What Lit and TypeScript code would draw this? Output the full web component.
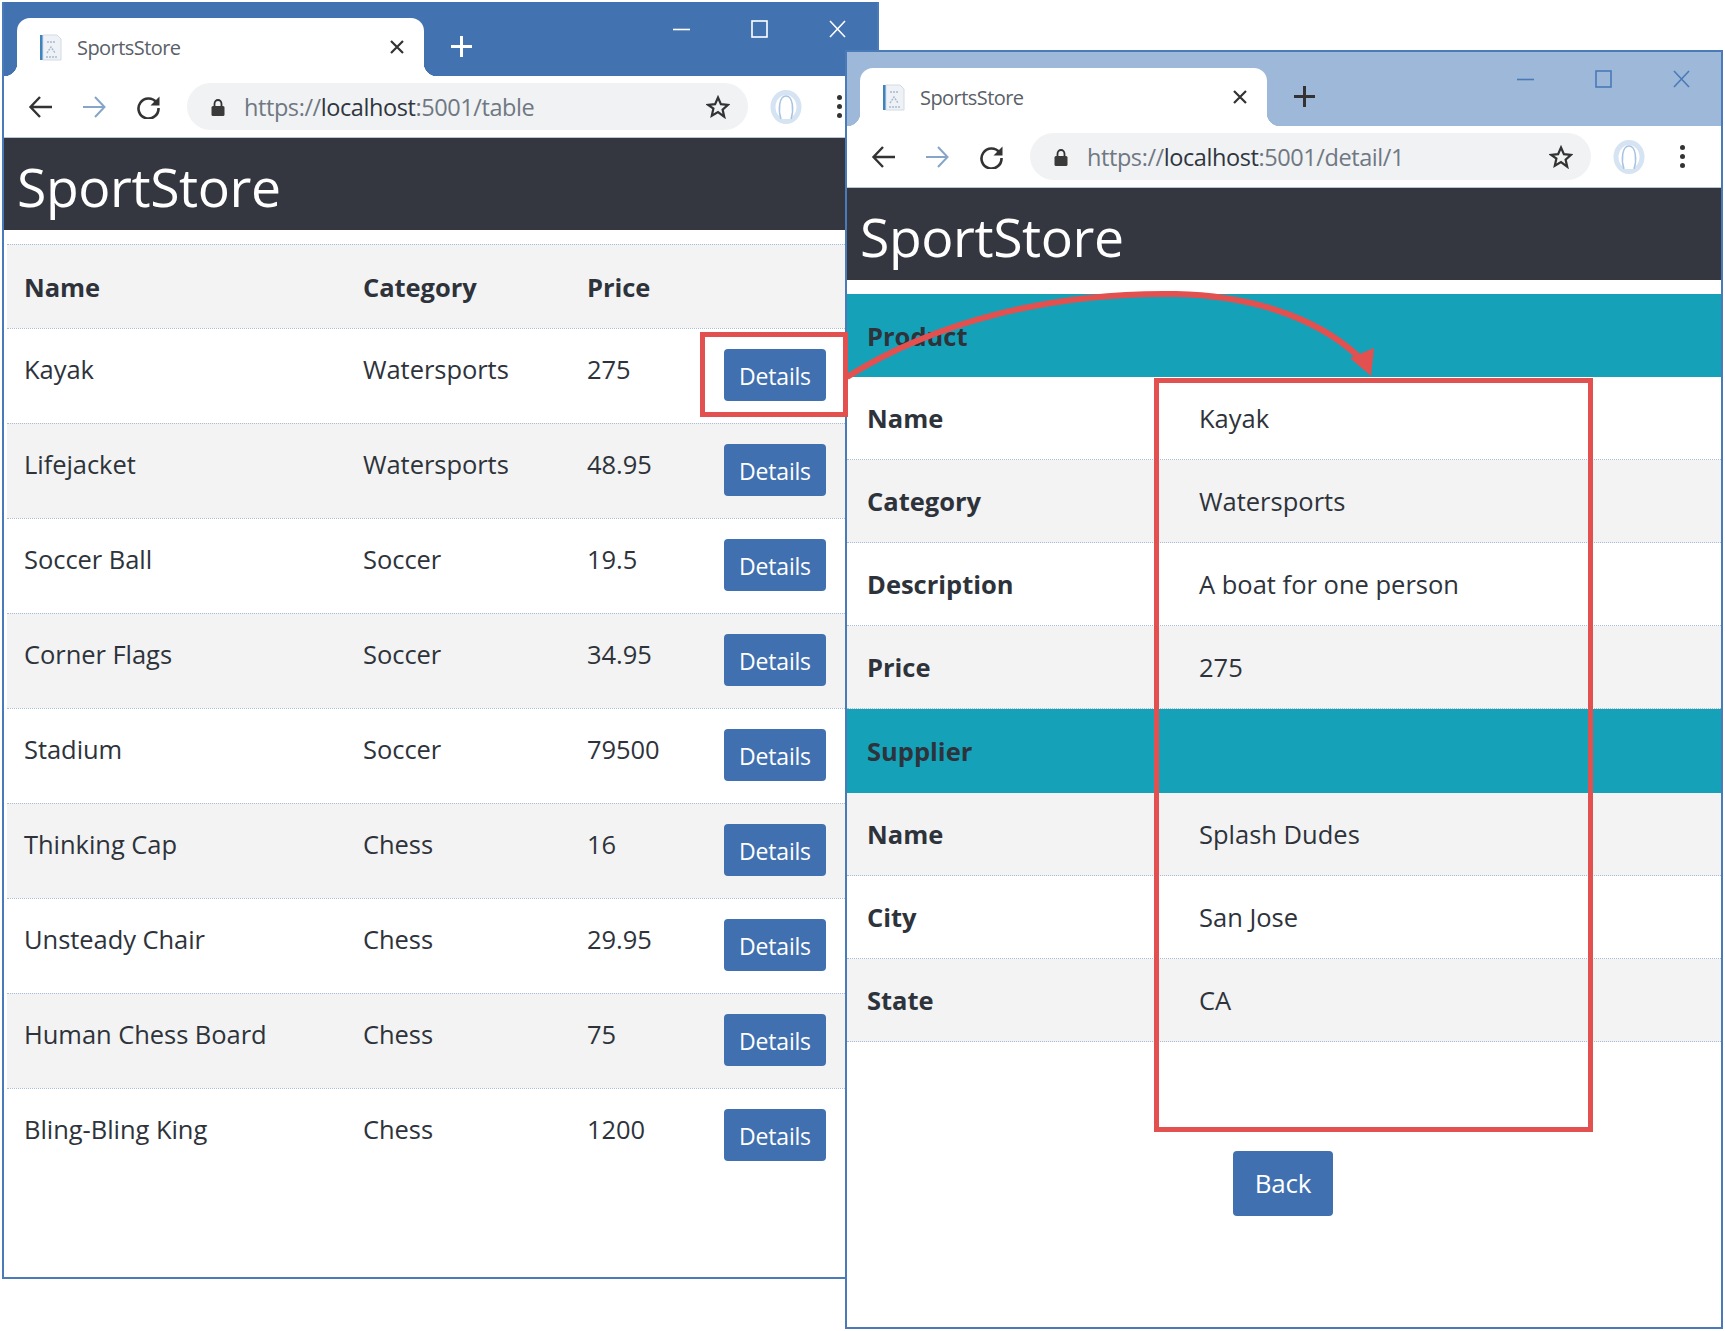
import { LitElement, html, css, svg } from 'lit';
import { customElement, property } from 'lit/decorators.js';

const icons = {
  favicon: svg`<rect x="3" y="2" width="3" height="25" fill="#3f83bd"/><path d="M6 2h14l4 4v21H6z" fill="#eef2f7" stroke="#d3dbe5"/><path d="M10 9h9M10 20l4-6 4 6M9 24h12" fill="none" stroke="#a9b9cc" stroke-width="1.400" stroke-dasharray="2 1"/>`,
  back: svg`<path d="M24 12H3M12 2L2.500 12l9.500 10" fill="none" stroke="#333" stroke-width="2.400"/>`,
  forward: svg`<path d="M1 12h21M13 2l9.500 10L13 22" fill="none" stroke="#86a5c9" stroke-width="2"/>`,
  reload: svg`<path d="M20.500 7.500A10 10 0 1 0 22.500 13" fill="none" stroke="#333" stroke-width="2.600"/><path d="M23.500 1.500v9h-9z" fill="#333"/>`,
  lock: svg`<path d="M3.500 8V6a3.500 4 0 0 1 7 0v2" fill="none" stroke="#333" stroke-width="1.800"/><rect x="0.500" y="8" width="13" height="10" rx="1.500" fill="#3a3a3a"/>`,
  star: svg`<path d="M12 2.500l2.900 6.600 7.100.7-5.400 4.800 1.600 7.100L12 17l-6.200 3.700 1.600-7.100L2 9.800l7.100-.7z" fill="none" stroke="#333" stroke-width="2.200"/>`,
  avatar: svg`<ellipse cx="16" cy="17" rx="13" ry="14.500" fill="none" stroke="#d5e3f2" stroke-width="5"/><path d="M11 29C8 20 9 6 16 6s8 14 5 23" fill="#fff" stroke="#a9c4e2" stroke-width="1.500"/>`,
};

@customElement('browser-window')
export class BrowserWindow extends LitElement {
  @property() url = '';
  @property({ type: Boolean }) inactive = false;

  static styles = css`
    :host {
      display: flex;
      flex-direction: column;
      box-sizing: border-box;
      background: #fff;
      border: 2px solid #4a7ab8;
      border-top-width: 0;
      --bar: #4272b0;
      --ctl: #fff;
      --plus: #fff;
      font-family: 'Open Sans', sans-serif;
    }
    :host([inactive]) {
      --bar: #9db8d8;
      --ctl: #4a7ab8;
      --plus: #333;
    }
    .titlebar {
      height: 74px;
      flex: none;
      background: var(--bar);
      display: flex;
      align-items: flex-end;
      padding-left: 13px;
    }
    .tab {
      position: relative;
      box-sizing: border-box;
      width: 407px;
      height: 58px;
      flex: none;
      background: #fff;
      border-radius: 13px 13px 0 0;
      display: flex;
      align-items: center;
      padding: 0 19px 0 20px;
      color: #5a6068;
    }
    .tab::before,
    .tab::after {
      content: '';
      position: absolute;
      bottom: 0;
      width: 13px;
      height: 13px;
    }
    .tab::before {
      left: -13px;
      background: radial-gradient(circle at 0 0, var(--bar) 13px, #fff 13.5px);
    }
    .tab::after {
      right: -13px;
      background: radial-gradient(circle at 100% 0, var(--bar) 13px, #fff 13.5px);
    }
    .tab-title {
      flex: 1;
      margin-left: 14px;
      font-size: 20px;
      letter-spacing: -0.55px;
    }
    .plus {
      margin: 0 0 19px 27px;
    }
    .controls {
      margin-left: auto;
      align-self: flex-start;
      display: flex;
      gap: 61px;
      padding: 18px 31px 0 0;
    }
    .toolbar {
      height: 62px;
      flex: none;
      box-sizing: border-box;
      display: flex;
      align-items: center;
      padding-left: 24px;
      border-bottom: 1px solid #b9c6d6;
    }
    .nav {
      display: flex;
      gap: 29px;
      margin-right: 26px;
    }
    .omnibox {
      box-sizing: border-box;
      width: 561px;
      height: 47px;
      flex: none;
      border-radius: 24px;
      background: #f1f2f3;
      display: flex;
      align-items: center;
      padding: 0 18px 0 24px;
    }
    .url {
      flex: 1;
      margin-left: 19px;
      font-size: 23.5px;
      letter-spacing: -0.42px;
      color: #6f7883;
      white-space: nowrap;
    }
    .url b {
      font-weight: 400;
      color: #2f3640;
    }
    .avatar {
      margin-left: 22px;
    }
    .kebab {
      margin-left: 35px;
      display: flex;
      flex-direction: column;
      gap: 4px;
    }
    .kebab i {
      width: 5px;
      height: 5px;
      border-radius: 50%;
      background: #333;
    }
    svg {
      display: block;
      flex: none;
    }
  `;

  private get hostUrl() {
    const m = this.url.match(/^(https:\/\/)(localhost)(.*)$/);
    return m ? html`${m[1]}<b>${m[2]}</b>${m[3]}` : this.url;
  }

  render() {
    return html`
      <div class="titlebar">
        <div class="tab">
          <svg width="26" height="28" viewBox="0 0 26 28">${icons.favicon}</svg>
          <span class="tab-title">SportsStore</span>
          <svg width="16" height="14" viewBox="0 0 16 14"><path d="M2 1l12 12M14 1L2 13" stroke="#333" stroke-width="2.200"/></svg>
        </div>
        <svg class="plus" width="21" height="21" viewBox="0 0 21 21"><path d="M10.500 0v21M0 10.500h21" stroke="var(--plus)" stroke-width="3"/></svg>
        <div class="controls">
          <svg width="17" height="18" viewBox="0 0 17 18"><path d="M0 9.500h17" stroke="var(--ctl)" stroke-width="1.600"/></svg>
          <svg width="17" height="18" viewBox="0 0 17 18"><rect x="1" y="1" width="15" height="16" fill="none" stroke="var(--ctl)" stroke-width="1.600"/></svg>
          <svg width="17" height="18" viewBox="0 0 17 18"><path d="M1 1l15 16M16 1L1 17" stroke="var(--ctl)" stroke-width="1.600"/></svg>
        </div>
      </div>
      <div class="toolbar">
        <div class="nav">
          <svg width="25" height="24" viewBox="0 0 25 24">${icons.back}</svg>
          <svg width="25" height="24" viewBox="0 0 25 24">${icons.forward}</svg>
          <svg width="25" height="24" viewBox="0 0 25 24">${icons.reload}</svg>
        </div>
        <div class="omnibox">
          <svg width="14" height="18" viewBox="0 0 14 18">${icons.lock}</svg>
          <span class="url">${this.hostUrl}</span>
          <svg width="24" height="24" viewBox="0 0 24 24">${icons.star}</svg>
        </div>
        <svg class="avatar" width="32" height="34" viewBox="0 0 32 34">${icons.avatar}</svg>
        <div class="kebab"><i></i><i></i><i></i></div>
      </div>
      <slot></slot>
    `;
  }
}

const products = [
  ['Kayak', 'Watersports', '275'],
  ['Lifejacket', 'Watersports', '48.95'],
  ['Soccer Ball', 'Soccer', '19.5'],
  ['Corner Flags', 'Soccer', '34.95'],
  ['Stadium', 'Soccer', '79500'],
  ['Thinking Cap', 'Chess', '16'],
  ['Unsteady Chair', 'Chess', '29.95'],
  ['Human Chess Board', 'Chess', '75'],
  ['Bling-Bling King', 'Chess', '1200'],
];

const detail = [
  { group: 'Product', striped: false },
  { label: 'Name', value: 'Kayak', striped: false },
  { label: 'Category', value: 'Watersports', striped: true },
  { label: 'Description', value: 'A boat for one person', striped: false },
  { label: 'Price', value: '275', striped: true },
  { group: 'Supplier', striped: false },
  { label: 'Name', value: 'Splash Dudes', striped: true },
  { label: 'City', value: 'San Jose', striped: false },
  { label: 'State', value: 'CA', striped: true },
];

@customElement('app-root')
export class AppRoot extends LitElement {
  static styles = css`
    :host {
      display: block;
      position: relative;
      width: 1725px;
      height: 1331px;
      background: #fff;
      overflow: hidden;
      font-family: 'Open Sans', sans-serif;
      color: #2e333b;
    }
    .win-list {
      position: absolute;
      left: 2px;
      top: 2px;
      width: 877px;
      height: 1277px;
    }
    .win-detail {
      position: absolute;
      left: 845px;
      top: 50px;
      width: 878px;
      height: 1279px;
      border-top-width: 2px;
    }
    .brand {
      height: 92px;
      box-sizing: border-box;
      flex: none;
      background: #343740;
      color: #fff;
      display: flex;
      align-items: center;
      padding: 4px 0 0 13px;
      font-size: 53.5px;
      font-weight: 500;
      letter-spacing: -0.4px;
      margin: 0;
    }
    .list {
      margin: 14px 0 0 3px;
      font-size: 25.5px;
      letter-spacing: -0.05px;
    }
    .list-row {
      display: grid;
      grid-template-columns: 339px 224px 137px 1fr;
      height: 95px;
      box-sizing: border-box;
      border-top: 1px dotted #a9bcd8;
      padding-left: 17px;
    }
    .list-row > span {
      padding-top: 23px;
    }
    .list-head {
      height: 84px;
      align-items: center;
      font-weight: 700;
      background: #f3f3f3;
    }
    .list-head > span {
      padding-top: 0;
    }
    .striped {
      background: #f3f3f3;
    }
    .btn {
      font: inherit;
      letter-spacing: -0.2px;
      color: #fff;
      background: #4070b0;
      border: none;
      border-radius: 4px;
    }
    .btn-details {
      width: 102px;
      height: 52px;
      margin-top: 20px;
      font-size: 23px;
      padding: 2px 0 0;
    }
    .sheet {
      margin-top: 14px;
      font-size: 25.5px;
      letter-spacing: 0;
    }
    .sheet-row {
      display: grid;
      grid-template-columns: 332px 1fr;
      align-items: center;
      height: 83.1px;
      box-sizing: border-box;
      padding-left: 20px;
      border-bottom: 1px dotted #a9bcd8;
    }
    .sheet-row b {
      font-weight: 700;
    }
    .sheet-group {
      background: #15a2b8;
      border-bottom: none;
    }
    .actions {
      display: flex;
      justify-content: center;
      margin-top: 109px;
      padding-right: 2px;
    }
    .btn-back {
      width: 100px;
      height: 65px;
      font-size: 26px;
      padding: 0;
    }
    .mark {
      position: absolute;
      box-sizing: border-box;
      border: 5px solid #e35050;
      pointer-events: none;
    }
    .mark-button {
      left: 700px;
      top: 332px;
      width: 148px;
      height: 85px;
    }
    .mark-panel {
      left: 1154px;
      top: 378px;
      width: 439px;
      height: 754px;
    }
    .arrow {
      position: absolute;
      left: 0;
      top: 0;
      pointer-events: none;
    }
  `;

  render() {
    return html`
      <browser-window class="win-list" url="https://localhost:5001/table">
        <h1 class="brand">SportStore</h1>
        <div class="list">
          <div class="list-row list-head">
            <span>Name</span><span>Category</span><span>Price</span><span></span>
          </div>
          ${products.map(
            (p, i) => html`
              <div class="list-row ${i % 2 ? 'striped' : ''}">
                <span>${p[0]}</span><span>${p[1]}</span><span>${p[2]}</span>
                <div><button class="btn btn-details">Details</button></div>
              </div>
            `
          )}
        </div>
      </browser-window>

      <browser-window class="win-detail" inactive url="https://localhost:5001/detail/1">
        <h1 class="brand">SportStore</h1>
        <div class="sheet">
          ${detail.map((d) =>
            d.group
              ? html`<div class="sheet-row sheet-group"><b>${d.group}</b></div>`
              : html`<div class="sheet-row ${d.striped ? 'striped' : ''}"><b>${d.label}</b><span>${d.value}</span></div>`
          )}
        </div>
        <div class="actions"><button class="btn btn-back">Back</button></div>
      </browser-window>

      <div class="mark mark-button"></div>
      <div class="mark mark-panel"></div>
      <svg class="arrow" width="1725" height="1331" viewBox="0 0 1725 1331">
        <path d="M847 377C935 322 1050 292 1176 294C1265 296 1328 325 1364 362" fill="none" stroke="#e35050" stroke-width="6"/>
        <path d="M1371 376L1350 358L1374 348z" fill="#e35050"/>
      </svg>
    `;
  }
}
